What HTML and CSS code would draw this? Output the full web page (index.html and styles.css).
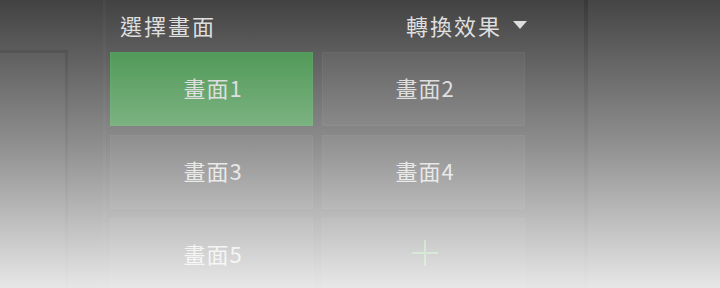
FILE: index.html
```html
<!DOCTYPE html>
<html lang="zh-Hant">
<head>
    <meta charset="UTF-8">
    <meta name="viewport" content="width=device-width, initial-scale=1.0">
    <title>選擇畫面</title>
    <link rel="stylesheet" href="styles.css">
</head>
<body>
    <div class="layout">
        <div class="side-panel"></div>

        <div class="scene-panel">
            <div class="scene-header">
                <span class="scene-title">選擇畫面</span>
                <span class="transition-select">轉換效果 <span class="caret"></span></span>
            </div>
            <div class="scene-grid">
                <div class="scene-tile active">畫面1</div>
                <div class="scene-tile">畫面2</div>
                <div class="scene-tile">畫面3</div>
                <div class="scene-tile">畫面4</div>
                <div class="scene-tile">畫面5</div>
                <div class="scene-tile add-tile"><span class="plus"></span></div>
            </div>
        </div>

        <div class="preview-panel"></div>
    </div>

    <!-- fade over the whole view -->
    <div class="fade"></div>
</body>
</html>
```

FILE: styles.css
```css
body {
    font-family: "Noto Sans CJK TC", "Noto Sans", sans-serif;
    background-color: #424242;
    margin: 0;
    padding: 0;
    width: 720px;
    height: 288px;
    overflow: hidden;
    position: relative;
}
.layout {
    display: flex;
    height: 100%;
}
.side-panel {
    width: 65px;
    margin-top: 50px;
    border-top: 3px solid #383838;
    border-right: 3px solid #383838;
    background-color: #444;
}
.scene-panel {
    width: 474px;
    margin-left: 35px;
    padding-left: 4px;
    border-left: 3px solid #474747;
    border-right: 4px solid #393939;
    display: flex;
    flex-direction: column;
}
.scene-header {
    height: 52px;
    flex-shrink: 0;
    display: flex;
    justify-content: space-between;
    align-items: center;
    padding: 0 0 2px 10px;
    width: 417px;
    color: #dcdcdc;
    font-size: 22px;
    letter-spacing: 2px;
    box-sizing: border-box;
}
.transition-select {
    display: flex;
    align-items: center;
    gap: 11px;
}
.caret {
    width: 0;
    height: 0;
    border-left: 7px solid transparent;
    border-right: 7px solid transparent;
    border-top: 8px solid #dcdcdc;
}
.scene-grid {
    display: grid;
    grid-template-columns: 203px 203px;
    grid-auto-rows: 74px;
    gap: 9px;
    flex-shrink: 0;
}
.scene-tile {
    background-color: #4a4a4a;
    border: 1px solid #505050;
    box-sizing: border-box;
    color: #d4d4d4;
    font-size: 22px;
    letter-spacing: 1px;
    display: flex;
    justify-content: center;
    align-items: center;
    padding: 0 0 4px 3px;
}
.scene-tile.active {
    background-color: #35893d;
    border-color: #3a8e42;
}
.plus {
    position: relative;
    width: 26px;
    height: 26px;
}
.plus::before,
.plus::after {
    content: '';
    position: absolute;
    background-color: #58a860;
}
.plus::before {
    left: 12px;
    top: 0;
    width: 2px;
    height: 26px;
}
.plus::after {
    top: 12px;
    left: 0;
    width: 26px;
    height: 2px;
}
.preview-panel {
    flex: 1;
    background-color: #454545;
}
.fade {
    position: absolute;
    top: 0;
    left: 0;
    width: 100%;
    height: 100%;
    background: linear-gradient(to bottom, rgba(255, 255, 255, 0), rgba(255, 255, 255, 0.4) 50%, rgba(255, 255, 255, 0.87));
    pointer-events: none;
}
```
